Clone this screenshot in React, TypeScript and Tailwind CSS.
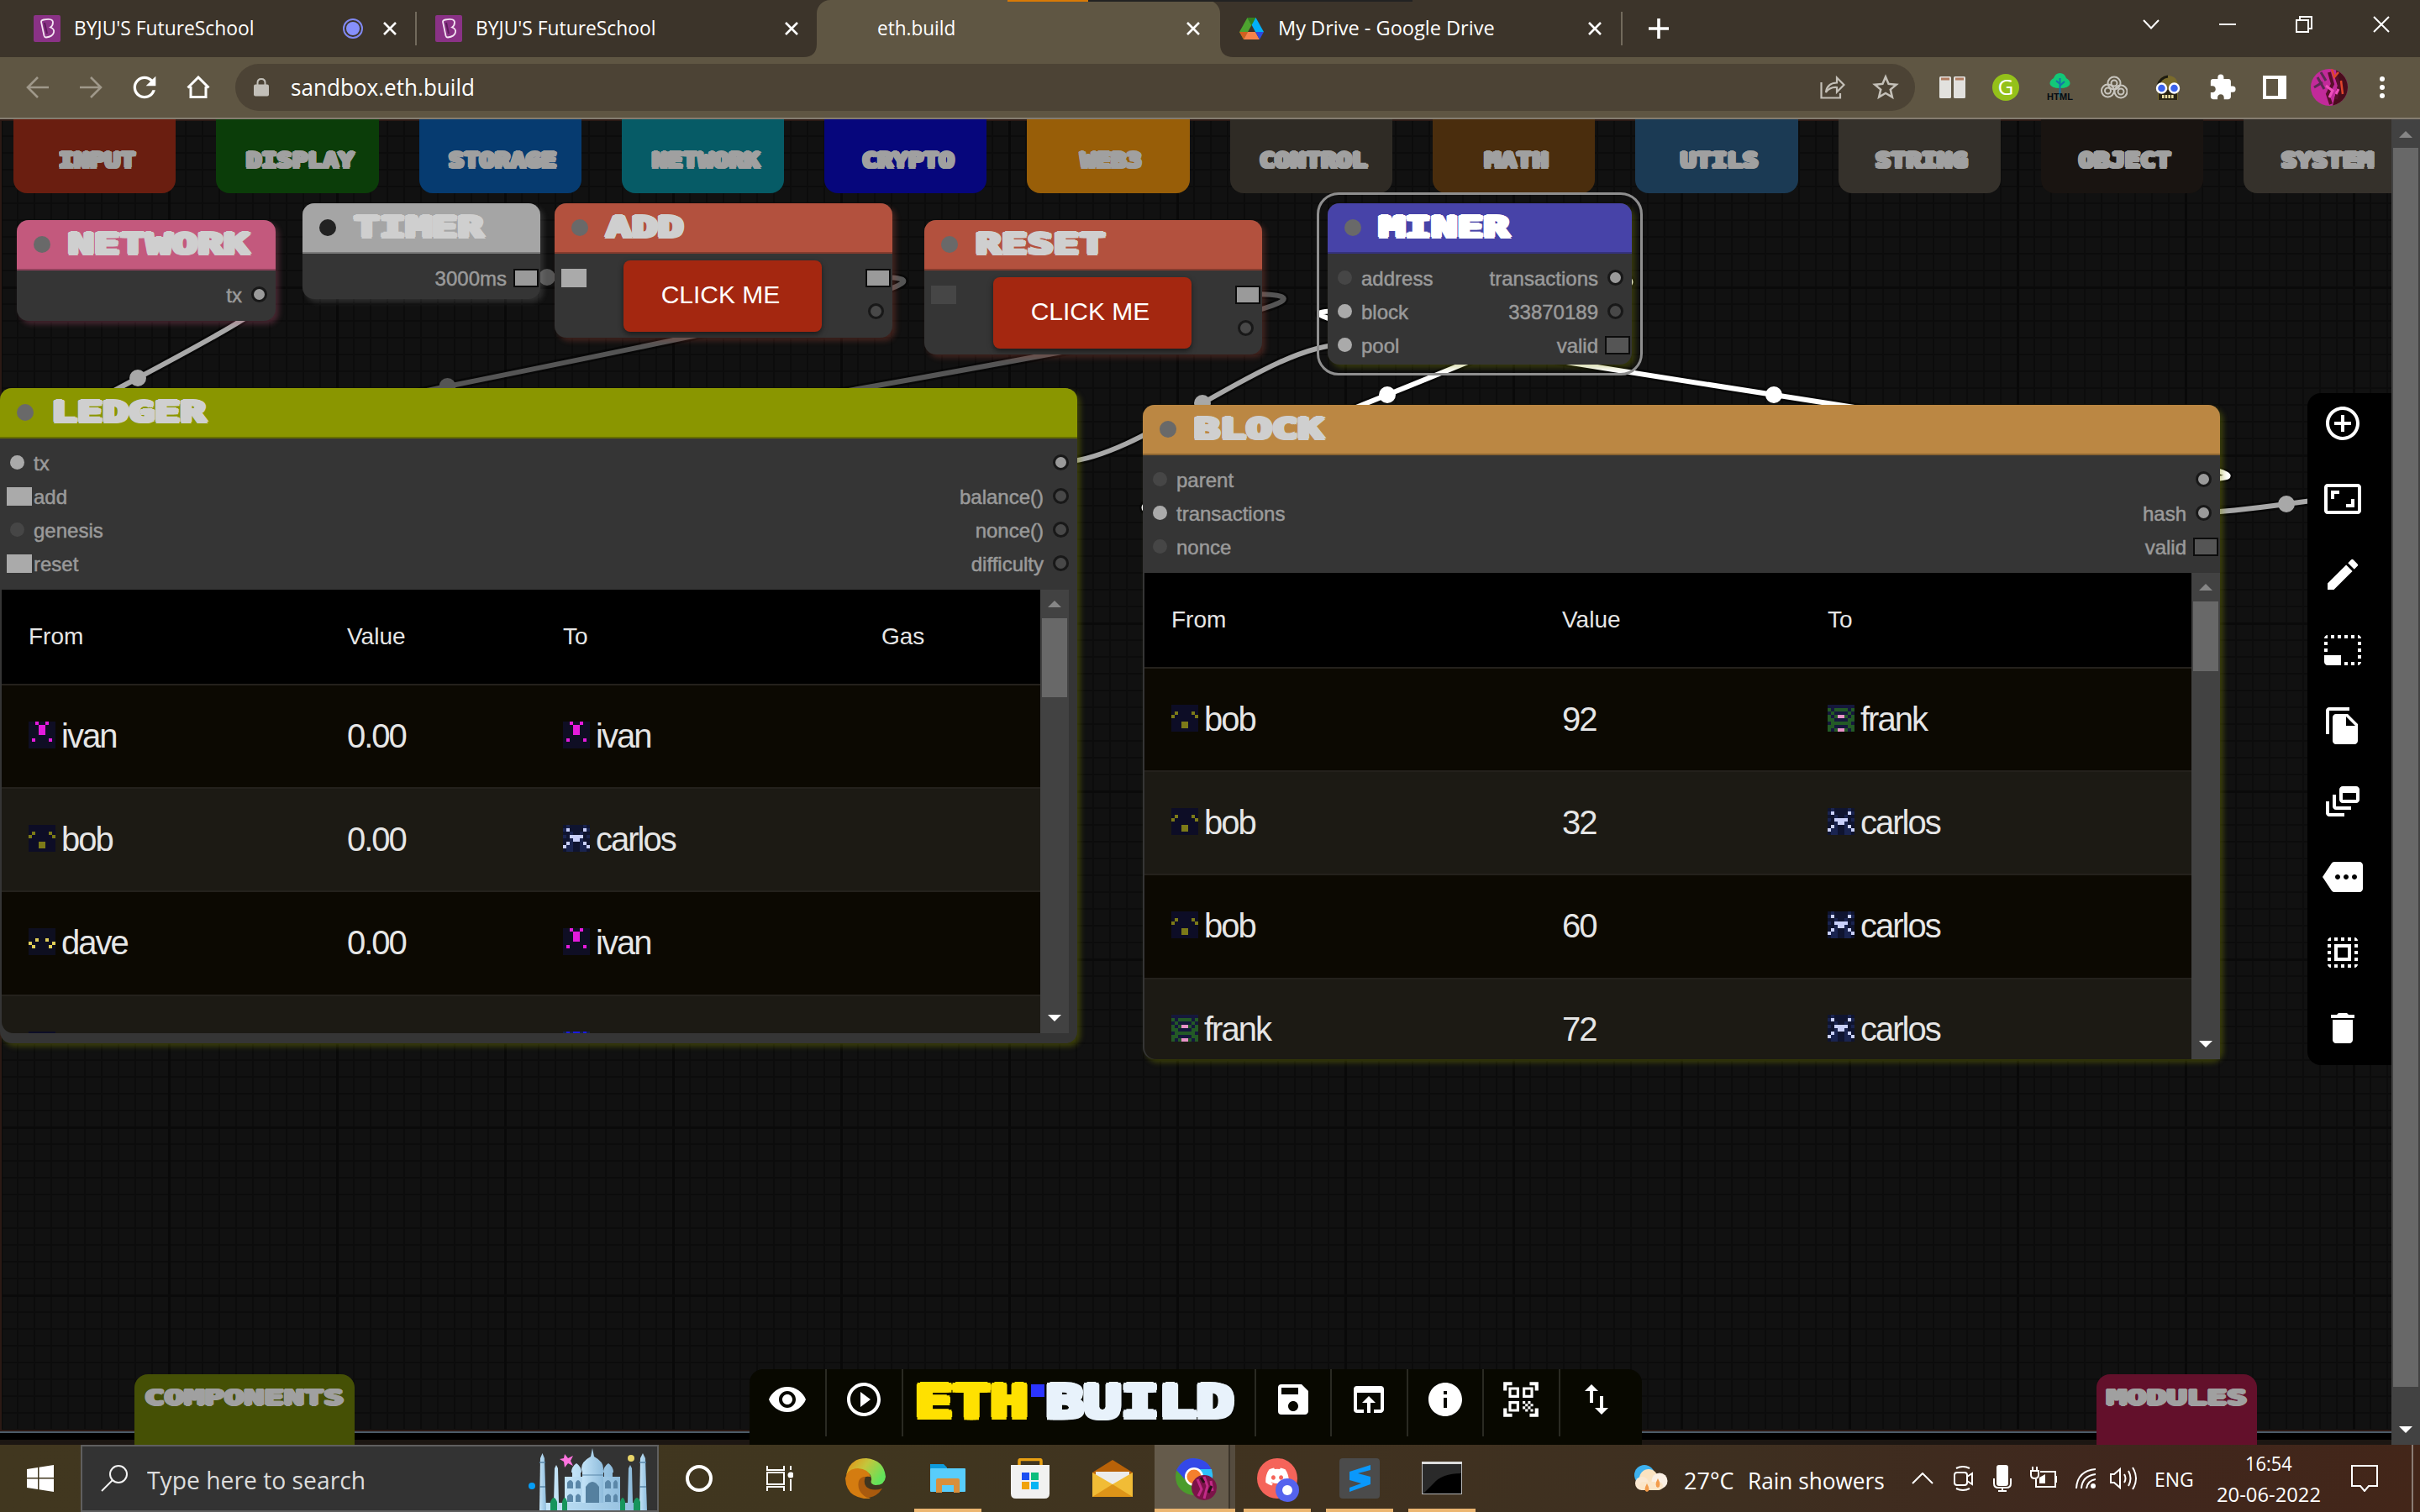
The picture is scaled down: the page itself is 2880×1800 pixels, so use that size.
import React, { useLayoutEffect, useRef, useState } from "react";
import {
  MdAddCircleOutline,
  MdAspectRatio,
  MdEdit,
  MdPhotoSizeSelectSmall,
  MdFileCopy,
  MdDynamicFeed,
  MdMore,
  MdSelectAll,
  MdDelete,
  MdVisibility,
  MdPlayCircleOutline,
  MdSave,
  MdOpenInBrowser,
  MdInfo,
  MdQrCodeScanner,
  MdImportExport,
  MdLock,
  MdStarBorder,
  MdExtension,
  MdRefresh,
} from "react-icons/md";
import { FaDiscord } from "react-icons/fa";

/** Text stretched horizontally to an exact width. */
function Fit({ w, className = "", children }: { w: number; className?: string; children: React.ReactNode }) {
  const ref = useRef<HTMLSpanElement>(null);
  const [scale, setScale] = useState(1);
  useLayoutEffect(() => {
    if (ref.current) setScale(w / ref.current.offsetWidth);
  }, [w]);
  return (
    <span className={"inline-flex shrink-0 whitespace-nowrap " + className} style={{ width: w }}>
      <span ref={ref} className="inline-block origin-left" style={{ transform: `scaleX(${scale})` }}>
        {children}
      </span>
    </span>
  );
}

const ui = "font-['Open_Sans','Noto_Sans',sans-serif]";
const arial = "font-['Liberation_Sans',Arial,sans-serif]";
const block = "font-['DejaVu_Sans_Mono',monospace] font-bold leading-none";
/* Same-colour offsets that thicken the display lettering. */
const heavy2 =
  "[text-shadow:2px_0_currentColor,-2px_0_currentColor,0_2px_currentColor,0_-2px_currentColor,1.5px_1.5px_currentColor,-1.5px_1.5px_currentColor,1.5px_-1.5px_currentColor,-1.5px_-1.5px_currentColor,1px_0_currentColor,-1px_0_currentColor]";
const heavy1 =
  "[text-shadow:1.5px_0_currentColor,-1.5px_0_currentColor,0_1.5px_currentColor,0_-1.5px_currentColor,1px_1px_currentColor,-1px_1px_currentColor,1px_-1px_currentColor,-1px_-1px_currentColor]";
const heavy3 =
  "[text-shadow:3px_0_currentColor,-3px_0_currentColor,0_3px_currentColor,0_-3px_currentColor,2.5px_2.5px_currentColor,-2.5px_2.5px_currentColor,2.5px_-2.5px_currentColor,-2.5px_-2.5px_currentColor,1.5px_0_currentColor,-1.5px_0_currentColor,0_1.5px_currentColor,0_-1.5px_currentColor]";

/* ---------- Browser chrome ---------- */

function Close() {
  return (
    <svg className="size-4 shrink-0" viewBox="0 0 16 16" stroke="#fff" strokeWidth="2.6">
      <path d="M1 1L15 15M15 1L1 15" />
    </svg>
  );
}

function Byju() {
  return (
    <svg className="size-8 shrink-0" viewBox="0 0 32 32" fill="none">
      <rect width="32" height="32" rx="2" fill="#8a3286" />
      <path d="M9 8q0-2 3-2.500q11-2 11 3 0 4-3 6 5 2 4 6-1 5-9 6-2 0-2.500-2Z" stroke="#f4e4f2" strokeWidth="1.800" />
      <path d="M13 9l3 13" stroke="#5c1c5a" strokeWidth="2" />
    </svg>
  );
}

function Drive() {
  return (
    <svg className="h-[26px] w-[29px] shrink-0" viewBox="0 0 29 26">
      <path d="M9.500 0L0 17l5 9L14.500 9z" fill="#4da32f" />
      <path d="M19.500 0L29 17H19L10 0z" fill="#02b0f8" />
      <path d="M9.500 0h10l-5 9z" fill="#33801c" />
      <path d="M0 17h10l-5 9z" fill="#d2601f" />
      <path d="M10 17h9l5 9H5z" fill="#f5834b" />
      <path d="M19 17h10l-5 9z" fill="#2d4be0" />
    </svg>
  );
}

function TabStrip() {
  return (
    <div className={"relative flex h-[68px] items-center bg-[#3c342a] text-[24px] leading-none text-white " + ui}>
      <div className="flex h-10 w-[496px] items-center border-r-2 border-[#726a5c] pl-10 pr-[22px]">
        <Byju />
        <Fit w={215} className="mb-[2px] ml-4">BYJU'S FutureSchool</Fit>
        <svg className="ml-auto mr-[24px] size-6" viewBox="0 0 24 24">
          <circle cx="12" cy="12" r="11" fill="none" stroke="#8088f0" strokeWidth="2" />
          <circle cx="12" cy="12" r="8" fill="#8790fb" />
        </svg>
        <Close />
      </div>
      <div className="flex h-10 w-[476px] items-center pl-[22px] pr-[22px]">
        <Byju />
        <Fit w={215} className="mb-[2px] ml-4">BYJU'S FutureSchool</Fit>
        <span className="flex-1" />
        <Close />
      </div>
      <div className="relative flex h-full w-[480px] items-center rounded-t-[16px] bg-[#5f5643] pl-[72px] pr-6">
        <svg className="absolute -left-4 bottom-0 size-4" viewBox="0 0 16 16"><path d="M16 0V16H0Q16 16 16 0" fill="#5f5643" /></svg>
        <svg className="absolute -right-4 bottom-0 size-4" viewBox="0 0 16 16"><path d="M0 0V16H16Q0 16 0 0" fill="#5f5643" /></svg>
        <Fit w={93} className="mb-[2px]">eth.build</Fit>
        <span className="flex-1" />
        <Close />
      </div>
      <div className="flex h-10 w-[479px] items-center border-r-2 border-[#726a5c] pl-[23px] pr-[23px]">
        <Drive />
        <Fit w={258} className="mb-[2px] ml-[17px]">My Drive - Google Drive</Fit>
        <span className="flex-1" />
        <Close />
      </div>
      <svg className="ml-[31px] size-6" viewBox="0 0 24 24" stroke="#fff" strokeWidth="3.600"><path d="M12 0V24M0 12H24" /></svg>
      <div className="mb-[10px] ml-auto mr-9 flex items-center">
        <svg className="mr-[71px] h-3 w-5" viewBox="0 0 20 12" fill="none" stroke="#fff" strokeWidth="2"><path d="M1 1L10 10.500L19 1" /></svg>
        <span className="mr-[71px] h-[2px] w-5 bg-white" />
        <svg className="mr-[72px] size-5" viewBox="0 0 20 20" fill="none" stroke="#fff" strokeWidth="2"><path d="M1 5H15V19H1ZM5 5V1H19V15H15" /></svg>
        <svg className="size-5" viewBox="0 0 20 20" stroke="#fff" strokeWidth="2"><path d="M1 1L19 19M19 1L1 19" /></svg>
      </div>
      <span className="absolute left-[1199px] top-0 h-[2px] w-24 bg-[#d97a06]" />
      <span className="absolute left-[1295px] top-0 h-[2px] w-[386px] bg-[#222]" />
    </div>
  );
}

function Toolbar() {
  return (
    <div className={"flex h-[74px] items-center border-b-2 border-[#857d70] bg-[#5f5643] text-white " + ui}>
      <svg className="ml-[31px] h-[26px] w-[27px]" viewBox="0 0 27 26" fill="none" stroke="#9f988a" strokeWidth="2.600"><path d="M27 13H2M14 1L2 13L14 25" /></svg>
      <svg className="ml-[37px] h-[26px] w-[27px]" viewBox="0 0 27 26" fill="none" stroke="#9f988a" strokeWidth="2.600"><path d="M0 13H25M13 1L25 13L13 25" /></svg>
      <MdRefresh className="ml-[30px] size-[40px]" />
      <svg className="ml-[30px] size-[28px]" viewBox="0 0 28 28" fill="none" stroke="#fff" strokeWidth="3"><path d="M5 13V25.500H23V13M1.500 14.500L14 2L26.500 14.500" /></svg>
      <div className="ml-[30px] flex h-14 w-[1999px] items-center rounded-full bg-[#4c4335] pl-[22px]">
        <svg className="h-[22px] w-[18px]" viewBox="0 0 18 22" fill="#c2bfb8"><rect y="7.500" width="18" height="14" rx="2" /><path d="M4.500 8V5.500Q4.500 1 9 1T13.500 5.500V8" fill="none" stroke="#c2bfb8" strokeWidth="2" /></svg>
        <Fit w={219} className="mb-[2px] ml-[26px] text-[28px] leading-none">sandbox.eth.build</Fit>
        <span className="flex-1" />
        <svg className="h-7 w-[30px]" viewBox="0 0 30 28" fill="none" stroke="#c4c0b8" strokeWidth="2.200"><path d="M1.500 8V26.500H24V21M7 20q1-11 13-11.500V2.500L28.500 11L20 19.500V14Q11 13.500 7 20Z" /></svg>
        <MdStarBorder className="ml-[29px] mr-4 size-[38px] text-[#c4c0b8]" />
      </div>
      <svg className="ml-[29px] h-7 w-[31px]" viewBox="0 0 31 28"><rect y="1" width="14" height="26" rx="1.500" fill="#e2e1de" /><rect x="17" y="1" width="14" height="26" rx="1.500" fill="#e2e1de" /><path d="M2 4h10M19 4h10" stroke="#b07c60" strokeWidth="3" /></svg>
      <div className="ml-8 flex size-8 items-center justify-center rounded-full bg-[#94c11a] pb-[2px] text-[26px] leading-none">G</div>
      <svg className="ml-[32px] h-9 w-[33px]" viewBox="-1 0 33 36"><path d="M15.500 1Q21 1 23 7Q28 10 27.500 14Q26 19 15.500 19Q5 19 3.500 14Q3 10 8 7Q10 1 15.500 1Z" fill="#12c878" /><path d="M15.500 7V30M15.500 14L11 10M15.500 16L21 11" stroke="#1573a8" strokeWidth="2" /><text x="0" y="33" fontSize="11" fontWeight="700" fontFamily="Liberation Sans" textLength="31" fill="#050b12">HTML</text></svg>
      <svg className="ml-[32px] h-7 w-8" viewBox="0 0 32 28" fill="none" stroke="#c8c5be" strokeWidth="2"><circle cx="16" cy="9" r="7.500" /><circle cx="16" cy="9" r="3.500" /><circle cx="8.500" cy="18" r="7.500" /><circle cx="8.500" cy="18" r="3.500" /><circle cx="24" cy="19" r="7.500" /><circle cx="24" cy="19" r="3.500" /></svg>
      <svg className="ml-[33px] h-[30px] w-[30px]" viewBox="0 0 30 30"><path d="M3 15Q3 1 15 1T27 15V30H3Z" fill="#7a6b2c" /><path d="M3 13Q6 3 15 2" stroke="#1c1a10" strokeWidth="3" fill="none" /><path d="M4 18H26V30H4Z" fill="#2a2414" /><path d="M8 26H22" stroke="#e8dca0" strokeWidth="4" strokeDasharray="2.500 1.200" /><circle cx="7.500" cy="16" r="5.500" fill="#3c63ea" stroke="#fff" strokeWidth="2.400" /><circle cx="22.500" cy="16" r="5.500" fill="#3c63ea" stroke="#fff" strokeWidth="2.400" /></svg>
      <MdExtension className="ml-[33px] size-[34px]" />
      <svg className="ml-[31px] size-7" viewBox="0 0 28 28"><path d="M0 0H28V28H0ZM4 4V24H18V4Z" fill="#fff" fillRule="evenodd" /></svg>
      <Avatar className="ml-[29px] size-11" />
      <svg className="ml-[38px] h-[26px] w-[6px]" viewBox="0 0 6 26" fill="#fff"><circle cx="3" cy="3" r="3" /><circle cx="3" cy="13" r="3" /><circle cx="3" cy="23" r="3" /></svg>
    </div>
  );
}

function Avatar({ className }: { className: string }) {
  return (
    <svg className={"shrink-0 rounded-full " + className} viewBox="0 0 44 44">
      <rect width="44" height="44" fill="#c22a9a" />
      <path d="M30 0L44 0V44H26L32 20Z" fill="#4a0c1c" />
      <path d="M8 10L16 24M4 22L14 16M12 4L18 14" stroke="#5b2b52" strokeWidth="3" />
      <path d="M22 4L26 18L20 30L24 42M30 8L34 20L30 36" stroke="#5a0f2c" strokeWidth="4" fill="none" />
      <path d="M25 0L28 10L33 4M36 14L38 30" stroke="#e0452a" strokeWidth="2.500" fill="none" />
      <path d="M18 20L26 26L22 34M33 24L30 30" stroke="#ef4fbc" strokeWidth="3" fill="none" />
    </svg>
  );
}

/* ---------- Canvas nodes ---------- */

type Slot = { label?: string; on?: boolean; box?: boolean };

function SlotMark({ slot, out }: { slot: Slot; out?: boolean }) {
  if (slot.box) {
    const tone = slot.on ? (out ? "bg-[#9a9a9a]" : "bg-[#aaaaaa]") : out ? "bg-[#555]" : "bg-[#464646]";
    return (
      <span className={"flex w-10 shrink-0 " + (out ? "justify-end pr-[2px]" : "pl-2")}>
        <span className={"mt-[2px] h-[22px] w-[30px] " + tone + (out ? " border-2 border-[#0c0c0c]" : "")} />
      </span>
    );
  }
  const tone = slot.on ? (out ? "bg-[#9a9a9a]" : "bg-[#aaaaaa]") : out ? "bg-[#484848]" : "bg-[#464646]";
  return (
    <span className="flex w-10 shrink-0 justify-center">
      <span className={(out ? "size-[19px] border-[3px] border-[#181818] " : "size-[17px] ") + "rounded-full " + tone} />
    </span>
  );
}

function Slots({ inputs = [], outputs = [] }: { inputs?: Slot[]; outputs?: Slot[] }) {
  return (
    <div className={"flex justify-between pt-2 text-[24px] leading-none text-[#9a9a9a] [-webkit-text-stroke:0.5px_#9a9a9a] " + arial}>
      <div>
        {inputs.map((s, i) => (
          <div key={i} className="flex h-10 items-center">
            <SlotMark slot={s} />
            <span className="mt-[3px]">{s.label}</span>
          </div>
        ))}
      </div>
      <div>
        {outputs.map((s, i) => (
          <div key={i} className="flex h-10 items-center justify-end">
            <span className="mt-[3px]">{s.label}</span>
            <SlotMark slot={s} out />
          </div>
        ))}
      </div>
    </div>
  );
}

type NodeProps = {
  title: string;
  w: number;
  place: string;
  head: string;
  dot?: string;
  ink?: string;
  inputs?: Slot[];
  outputs?: Slot[];
  children?: React.ReactNode;
};

function Node({ title, w, place, head, dot = "bg-[#696969]", ink = "text-[#cfcfcf]", inputs, outputs, children }: NodeProps) {
  return (
    <div className={"absolute flex flex-col rounded-[14px] bg-[#353535] " + place}>
      <div className={"flex h-[60px] shrink-0 items-center rounded-t-[14px] border-b-2 border-black/25 pl-5 " + head}>
        <span className={"size-5 rounded-full " + dot} />
        <Fit w={w} className={"mb-[2px] ml-[21px] text-[33px] " + heavy2 + " " + block + " " + ink}>
          {title}
        </Fit>
      </div>
      <Slots inputs={inputs} outputs={outputs} />
      {children}
    </div>
  );
}

function ClickMe() {
  return (
    <button className={"absolute left-[82px] top-[68px] h-[85px] w-[236px] rounded-[8px] bg-[#a42710] pb-[3px] pr-[5px] text-[30px] leading-none text-white shadow-[0_3px_6px_rgba(0,0,0,0.5)] " + arial}>
      CLICK ME
    </button>
  );
}

const sprites: Record<string, { rows: string[]; colors: Record<string, string> }> = {
  ivan: {
    rows: ["..m..m..", "...mm...", "...mm...", "...mm...", "........", ".m....m.", "........", "........"],
    colors: { ".": "#0f0e24", m: "#e41bdc" },
  },
  bob: {
    rows: ["........", "........", ".y....y.", "y......y", "........", "...yy...", "...yy...", "........"],
    colors: { ".": "#0d0d26", y: "#7c7a18" },
  },
  dave: {
    rows: ["........", "........", "........", "..y..y..", "y......y", ".y....y.", "........", "........"],
    colors: { ".": "#0e0f20", y: "#e0ce58" },
  },
  carlos: {
    rows: [".n....n.", "nw....wn", "..n..n..", "n.wwww.n", "..nwwn..", ".wn..nw.", "wnn..nnw", ".nn..nn."],
    colors: { ".": "#0f1430", n: "#1a2450", w: "#c9d0fa" },
  },
  frank: {
    rows: ["nnnnnnnn", "gnggggng", "ngnnnngn", "gngppgng", "ggnnnngg", "nggggggn", "ggnnnngg", "gngppgng"],
    colors: { n: "#15183c", g: "#235a26", p: "#e892c8" },
  },
  grace: {
    rows: [".b.bb.b.", "bb.bb.bb", "........", "........", "........", "........", "........", "........"],
    colors: { ".": "#12204c", b: "#1a1ae0" },
  },
};

function Person({ name, bare }: { name: string; bare?: boolean }) {
  const s = sprites[name];
  return (
    <span className="flex items-center gap-[7px]">
      <svg className="mt-[-4px] size-8 shrink-0" viewBox="0 0 8 8" shapeRendering="crispEdges">
        {s.rows.flatMap((row, y) => row.split("").map((c, x) => <rect key={x + "-" + y} x={x} y={y} width="1" height="1" fill={s.colors[c]} />))}
      </svg>
      {!bare && <span className="mb-[2px]">{name}</span>}
    </span>
  );
}

function Table({ cols, heads, rows, thumb }: { cols: string; heads: string[]; rows: [string, string, string][]; thumb: string }) {
  return (
    <div className={"flex flex-1 overflow-hidden rounded-bl-[14px] text-white " + arial}>
      <div className="flex-1 text-[#e6e6e6]">
        <div className={"grid h-[114px] items-center border-b-2 border-[#24211c] bg-black pb-[1px] text-[28px] leading-none " + cols}>
          {heads.map((h) => (
            <span key={h}>{h}</span>
          ))}
        </div>
        {rows.map(([from, value, to], i) => (
          <div
            key={i}
            className={
              "grid h-[123.2px] items-center border-b-2 border-[#24211c] text-[40px] leading-none tracking-[-2px] " +
              cols +
              (i % 2 ? " bg-[#1c1a14]" : " bg-[#0c0902]")
            }
          >
            <Person name={from} bare={!value} />
            <span className="mb-[2px]">{value}</span>
            <Person name={to} bare={!value} />
          </div>
        ))}
      </div>
      <div className="flex w-[34px] shrink-0 flex-col items-center bg-[#424242]">
        <Arrow className="mt-[13px] h-2 w-4 shrink-0 text-[#868686]" up />
        <div className={"w-[30px] shrink-0 bg-[#686868] " + thumb} />
        <span className="flex-1" />
        <Arrow className="mb-[14px] h-2 w-4 shrink-0 text-white" />
      </div>
    </div>
  );
}

function Arrow({ className, up }: { className: string; up?: boolean }) {
  return (
    <svg className={className} viewBox="0 0 16 8" fill="currentColor">
      <path d={up ? "M0 8L8 0L16 8Z" : "M0 0L8 8L16 0Z"} />
    </svg>
  );
}

type Pt = [number, number];
const links: { a: Pt; b: Pt; color: string }[] = [
  { a: [308, 208], b: [20, 408], color: "#a8a8a8" },
  { a: [626, 188], b: [676, 188], color: "#555555" },
  { a: [1045, 188], b: [20, 448], color: "#555555" },
  { a: [1485, 208], b: [20, 528], color: "#555555" },
  { a: [1262, 408], b: [1600, 268], color: "#a8a8a8" },
  { a: [1922, 188], b: [1380, 468], color: "#ffffff" },
  { a: [2622, 428], b: [1600, 228], color: "#ffffff" },
  { a: [2622, 468], b: [2820, 448], color: "#a8a8a8" },
];

/** Spline wires between slots, with a bead at each midpoint. */
function Wires() {
  return (
    <svg className="absolute left-0 top-0 h-[1562px] w-[2846px]" viewBox="0 0 2846 1562" fill="none">
      {links.map(({ a, b, color }, i) => {
        const k = Math.hypot(b[0] - a[0], b[1] - a[1]) * 0.25;
        const d = `M${a[0]} ${a[1]}C${a[0] + k} ${a[1]} ${b[0] - k} ${b[1]} ${b[0]} ${b[1]}`;
        return (
          <g key={i}>
            <path d={d} stroke="#000" strokeOpacity="0.5" strokeWidth="11" />
            <path d={d} stroke={color} strokeWidth="6" />
            <circle cx={(a[0] + b[0]) / 2} cy={(a[1] + b[1]) / 2} r="10" fill={color} />
          </g>
        );
      })}
    </svg>
  );
}

const menu: { label: string; w: number; bg: string }[] = [
  { label: "INPUT", w: 91, bg: "bg-[#6a1e10]" },
  { label: "DISPLAY", w: 128, bg: "bg-[#0b3d09]" },
  { label: "STORAGE", w: 128, bg: "bg-[#063b70]" },
  { label: "NETWORK", w: 128, bg: "bg-[#065b66]" },
  { label: "CRYPTO", w: 110, bg: "bg-[#06067c]" },
  { label: "WEB3", w: 73, bg: "bg-[#985e08]" },
  { label: "CONTROL", w: 128, bg: "bg-[#2f2b25]" },
  { label: "MATH", w: 76, bg: "bg-[#4a2d0d]" },
  { label: "UTILS", w: 92, bg: "bg-[#1b3a54]" },
  { label: "STRING", w: 110, bg: "bg-[#35312b]" },
  { label: "OBJECT", w: 110, bg: "bg-[#191411]" },
  { label: "SYSTEM", w: 110, bg: "bg-[#35312b]" },
];

const sideIcons = [MdAddCircleOutline, MdAspectRatio, MdEdit, MdPhotoSizeSelectSmall, MdFileCopy, MdDynamicFeed, MdMore, MdSelectAll, MdDelete];

function Dock() {
  const cell = "flex h-20 w-[90.500px] shrink-0 items-center justify-center border-r-2 border-[#2a2a22] pb-2";
  return (
    <div className="absolute bottom-0 left-[892px] flex h-[90px] w-[1062px] rounded-t-[16px] bg-[#080800] text-white">
      <div className="flex h-20 w-[92px] shrink-0 items-center justify-center border-r-2 border-[#2a2a22] pb-2"><MdVisibility className="size-12" /></div>
      <div className={cell}><MdPlayCircleOutline className="size-12" /></div>
      <div className={"flex h-20 w-[420px] shrink-0 items-center border-r-2 border-[#2a2a22] pb-[2px] pl-[14px] text-[54px] " + heavy3 + " " + block}>
        <Fit w={135} className="text-[#ffe100]">ETH</Fit>
        <span className="mb-[28px] ml-[3px] h-[15px] w-4 bg-[#2b34ff]" />
        <Fit w={224} className="ml-[2px] text-[#e8f2fb]">BUILD</Fit>
      </div>
      <div className={cell}><MdSave className="size-12" /></div>
      <div className={cell}><MdOpenInBrowser className="size-12" /></div>
      <div className={cell}><MdInfo className="size-12" /></div>
      <div className={cell}><MdQrCodeScanner className="size-[50px]" /></div>
      <div className="flex h-20 w-[86px] items-center justify-center pb-2"><MdImportExport className="size-12" /></div>
    </div>
  );
}

function Sandbox() {
  return (
    <div className="flex h-[1578px]">
      <div className="relative h-full w-[2846px] overflow-hidden bg-black">
        <div className="h-[1562px] border-b-2 border-l-2 border-t-2 border-[#2c1a15] bg-[#111111] bg-[linear-gradient(#0a0a0a_3px,transparent_3px),linear-gradient(90deg,#090909_3px,transparent_3px),linear-gradient(#0c0c0c_2px,transparent_2px),linear-gradient(90deg,#0c0c0c_2px,transparent_2px)] bg-[length:200px_200px,200px_200px,20px_20px,20px_20px] bg-[position:-2px_-3px]" />
        <div className="h-[2px] bg-[#4d5c69]" />
        <div className="h-2 bg-black" />
        <div className="h-[6px] bg-[#1c1612]" />

        <div className="absolute left-4 top-0 flex gap-12">
          {menu.map((m) => (
            <div key={m.label} className={"flex h-[88px] w-[193.300px] shrink-0 items-center justify-center rounded-b-[16px] pl-[6px] pt-[10px] " + m.bg}>
              <Fit w={m.w} className={"text-[24px] text-[#a0a0a0] " + heavy2 + " " + block}>{m.label}</Fit>
            </div>
          ))}
        </div>

        <Wires />

        <Node title="NETWORK" w={216} place="left-[20px] top-[120px] h-[120px] w-[308px] shadow-[4px_4px_6px_rgba(195,89,123,0.3)]" head="bg-[#c3597d]" outputs={[{ label: "tx", on: true }]} />
        <Node title="TIMER" w={154} place="left-[360px] top-[100px] h-[114px] w-[283px] shadow-[4px_4px_6px_rgba(165,165,165,0.2)]" head="bg-[#a5a5a5]" dot="bg-[#222]" outputs={[{ label: "3000ms", on: true, box: true }]} />
        <Node
          title="ADD"
          w={93}
          place="left-[660px] top-[100px] h-[160px] w-[402px] shadow-[4px_4px_6px_rgba(179,81,62,0.3)]"
          head="bg-[#b3513e]"
          inputs={[{ box: true, on: true }]}
          outputs={[{ box: true, on: true }, {}]}
        >
          <ClickMe />
        </Node>
        <Node
          title="RESET"
          w={154}
          place="left-[1100px] top-[120px] h-[160px] w-[402px] shadow-[4px_4px_6px_rgba(179,81,62,0.3)]"
          head="bg-[#b3513e]"
          inputs={[{ box: true }]}
          outputs={[{ box: true, on: true }, {}]}
        >
          <ClickMe />
        </Node>
        <div className="absolute left-[1567px] top-[87px] h-[218px] w-[388px] rounded-[26px] border-[3px] border-[#8f8f8f]" />
        <Node
          title="MINER"
          w={155}
          place="left-[1580px] top-[100px] h-[192px] w-[362px] shadow-[4px_4px_6px_rgba(138,150,0,0.3)]"
          head="bg-[#4743a8]"
          ink="text-white"
          inputs={[{ label: "address" }, { label: "block", on: true }, { label: "pool", on: true }]}
          outputs={[{ label: "transactions", on: true }, { label: "33870189" }, { label: "valid", box: true }]}
        />
        <Node
          title="LEDGER"
          w={184}
          place="left-0 top-[320px] h-[780px] w-[1282px] shadow-[4px_4px_6px_rgba(138,150,0,0.35)]"
          head="bg-[#8a9600]"
          inputs={[{ label: "tx", on: true }, { label: "add", on: true, box: true }, { label: "genesis" }, { label: "reset", on: true, box: true }]}
          outputs={[{ on: true }, { label: "balance()" }, { label: "nonce()" }, { label: "difficulty" }]}
        >
          <div className="mb-3 ml-[2px] mr-[10px] mt-3 flex flex-1 overflow-hidden">
            <Table
              cols="grid-cols-[379px_257px_379px_1fr] pl-8"
              heads={["From", "Value", "To", "Gas"]}
              rows={[
                ["ivan", "0.00", "ivan"],
                ["bob", "0.00", "carlos"],
                ["dave", "0.00", "ivan"],
                ["bob", "", "grace"],
              ]}
              thumb="mt-[13px] h-[94px]"
            />
          </div>
        </Node>
        <Node
          title="BLOCK"
          w={154}
          place="left-[1360px] top-[340px] h-[779px] w-[1282px] shadow-[4px_4px_6px_rgba(138,150,0,0.35)]"
          head="bg-[#bb8743]"
          inputs={[{ label: "parent" }, { label: "transactions", on: true }, { label: "nonce" }]}
          outputs={[{ on: true }, { label: "hash", on: true }, { label: "valid", box: true }]}
        >
          <div className="ml-[2px] mt-3 flex flex-1 overflow-hidden">
            <Table
              cols="grid-cols-[465px_316px_1fr] pl-8"
              heads={["From", "Value", "To"]}
              rows={[
                ["bob", "92", "frank"],
                ["bob", "32", "carlos"],
                ["bob", "60", "carlos"],
                ["frank", "72", "carlos"],
              ]}
              thumb="mt-[13px] h-[83px]"
            />
          </div>
        </Node>

        <div className="absolute right-0 top-[326px] flex h-[800px] w-[100px] flex-col items-center gap-[42px] rounded-l-[16px] bg-black pr-4 pt-3 text-white">
          {sideIcons.map((Icon, i) => (
            <Icon key={i} className="size-12 shrink-0" />
          ))}
        </div>

        <div className={"absolute bottom-0 left-[160px] flex h-[84px] w-[262px] justify-center rounded-t-[16px] bg-[#455005] pt-4 text-[24px] text-[#a0a0a0] " + heavy1 + " " + block}>
          <Fit w={238}>COMPONENTS</Fit>
        </div>
        <div className={"absolute bottom-0 left-[2495px] flex h-[84px] w-[191px] justify-center rounded-t-[16px] bg-[#63102b] pt-4 text-[24px] text-[#a0a0a0] " + heavy1 + " " + block}>
          <Fit w={167}>MODULES</Fit>
        </div>
        <Dock />
      </div>
      <div className="flex w-[34px] flex-col items-center bg-[#424242]">
        <Arrow className="mt-[14px] h-2 w-4 text-[#868686]" up />
        <div className="mt-3 h-[1475px] w-[30px] bg-[#686868]" />
        <Arrow className="mt-[47px] h-2 w-4 text-white" />
      </div>
    </div>
  );
}

/* ---------- Taskbar ---------- */

function Monument() {
  return (
    <svg className="h-[76px] w-[150px]" viewBox="0 0 150 76">
      <defs>
        <linearGradient id="marble" x1="0" x2="1">
          <stop offset="0" stopColor="#c4e4f8" />
          <stop offset="1" stopColor="#8fbcdc" />
        </linearGradient>
      </defs>
      <g fill="url(#marble)">
        <rect x="20" y="67" width="112" height="9" />
        <path d="M77 2L79 12Q90 18 90 26Q90 31 86 34H68Q64 31 64 26Q64 18 75 12Z" />
        <path d="M44 36H110V67H44Z" />
        <path d="M65 28H90V67H65Z" />
        <path d="M58 20Q64 24 64 31H52Q52 24 58 20ZM96 20Q102 24 102 31H90Q90 24 96 20Z" />
        <path d="M53 31H63V36H53ZM91 31H101V36H91Z" />
        <path d="M14 76L15 14L17.500 8L20 14L22 76Z" />
        <path d="M133 76L134 14L137 8L140 14L142 76Z" />
        <path d="M31 67L32 26L34 22L36 26L37 67ZM119 67L120 26L122 22L124 26L125 67Z" />
      </g>
      <path d="M65 34H90" stroke="#5b87a8" strokeWidth="1" />
      <path d="M69 67V48Q77 36 85 48V67Z" fill="#55809f" />
      <path d="M47 50V43q4-6 7 0v7zM57 50V43q3-6 6 0v7zM92 50V43q4-6 7 0v7zM102 50V43q3-6 5 0v7zM47 66V59q4-5 7 0v7zM57 66V59q3-5 6 0v7zM92 66V59q4-5 7 0v7zM102 66V59q3-5 5 0v7z" fill="#5b87a8" />
      <path d="M14 19H21M14 48H21M133 19H141M133 48H141" stroke="#5b87a8" strokeWidth="1.500" />
      <path d="M27 76V66Q31 56 35 66V76ZM126 76V66Q130 56 134 66V76ZM41 76V66Q44 56 47 66V76ZM110 76V66Q113 56 116 66V76Z" fill="#17955c" />
      <path d="M44 9L48 14L54 11L51 17L54 23L48 20L44 25L43 18L38 15L43 14Z" fill="#ff74e0" />
      <circle cx="123" cy="14" r="4" fill="#e8d468" />
      <circle cx="5" cy="47" r="4" fill="#069df5" />
    </svg>
  );
}

function TaskApp({ children, line, active }: { children: React.ReactNode; line?: boolean; active?: boolean }) {
  return (
    <div className={"relative flex h-20 w-24 shrink-0 items-center justify-center " + (active ? "bg-[#655b4b]" : "")}>
      {active && <span className="absolute right-0 top-0 h-20 w-2 border-l-2 border-[#3c352a] bg-[#554c3f]" />}
      <span className="relative flex">{children}</span>
      {line && <span className={"absolute bottom-0 h-1 bg-[#ecb671] " + (active ? "w-24" : "w-20")} />}
    </div>
  );
}

function Apps() {
  return (
    <div className="ml-[6px] flex gap-[2px]">
      <TaskApp>
        <svg className="size-12" viewBox="0 0 48 48">
          <defs>
            <linearGradient id="edgeA" x1="0" y1="0" x2="1" y2="0.500">
              <stop offset="0" stopColor="#e98a10" />
              <stop offset="0.500" stopColor="#c4c63c" />
              <stop offset="1" stopColor="#63e35a" />
            </linearGradient>
          </defs>
          <path d="M1 20Q5 0 25 0Q46 2 48 22Q47 32 36 32Q29 31 31 26Q32 18 22 15Q8 12 1 20Z" fill="url(#edgeA)" />
          <path d="M0 24Q2 12 15 12Q28 13 30 22Q20 20 16 29Q16 42 30 48Q26 48 22 48Q1 45 0 24Z" fill="#d47c10" />
          <path d="M16 27Q13 40 26 47Q38 46 44 36Q32 40 25 34Q21 29 24 22Q18 22 16 27Z" fill="#a85a0e" />
        </svg>
      </TaskApp>
      <TaskApp line>
        <svg className="h-[34px] w-[42px]" viewBox="0 0 42 34">
          <path d="M0 0H16L20 4V10H0Z" fill="#0f9bdc" />
          <rect y="5" width="42" height="28" rx="1" fill="#58cdfb" />
          <path d="M7 34V19Q7 17 9 17H33Q35 17 35 19V34H28V25H14V34Z" fill="#d98f3c" />
        </svg>
      </TaskApp>
      <TaskApp>
        <svg className="size-12" viewBox="0 0 48 48">
          <path d="M11 11V3Q11 1.500 13 1.500H35Q37 1.500 37 3V11" stroke="#e9a012" strokeWidth="3.500" fill="none" />
          <path d="M1 8H47V42Q47 48 41 48H7Q1 48 1 42Z" fill="#f1f1f1" />
          <rect x="14" y="17" width="9" height="9" fill="#1b50f2" /><rect x="25" y="17" width="9" height="9" fill="#0dbd7c" />
          <rect x="14" y="28" width="9" height="9" fill="#f0a30c" /><rect x="25" y="28" width="9" height="9" fill="#07b4f4" />
        </svg>
      </TaskApp>
      <TaskApp>
        <svg className="h-11 w-12" viewBox="0 0 48 44">
          <path d="M0 15L24 0L48 15V20H0Z" fill="#b96208" />
          <path d="M4 14H44V32H4Z" fill="#ececec" />
          <path d="M0 15L24 29L48 15V44H0Z" fill="#f1bc36" />
          <path d="M0 44L24 29L48 44Z" fill="#dd9418" />
        </svg>
      </TaskApp>
      <TaskApp line active>
        <svg className="size-[54px]" viewBox="0 0 54 54">
          <circle cx="26" cy="25" r="22" fill="#4b9c2c" />
          <path d="M5 17Q13 2 26 3Q42 4 47 17H26Q17 18 15 28Z" fill="#3448e8" />
          <path d="M26 16H47Q51 30 42 40L30 46L36 30Z" fill="#2cc0fa" />
          <circle cx="26" cy="25" r="11" fill="#fff" />
          <circle cx="26" cy="25" r="8.500" fill="#f5802e" />
          <circle cx="38" cy="38" r="15" fill="#7b1348" />
          <path d="M30 28L35 40L31 48M38 25L42 36L38 51M46 30L48 42" stroke="#c22a88" strokeWidth="3" fill="none" />
          <path d="M34 26L38 32M43 44L47 36" stroke="#2a1018" strokeWidth="3" />
        </svg>
      </TaskApp>
      <TaskApp line>
        <div className="relative flex size-12 items-center justify-center rounded-full bg-[#f5645a] text-white">
          <FaDiscord className="mb-1 size-[30px]" />
          <span className="absolute -bottom-1 -right-[2px] flex size-7 items-center justify-center rounded-full bg-[#5563ee]">
            <span className="size-3 rounded-full bg-white" />
          </span>
        </div>
      </TaskApp>
      <TaskApp line>
        <svg className="size-12" viewBox="0 0 48 48">
          <rect width="48" height="48" rx="4" fill="#4b4b4b" />
          <path d="M37 8L12 16V26L26 30L12 35V40L37 31V22L22 18L37 14Z" fill="#0a98fb" />
        </svg>
      </TaskApp>
      <TaskApp line>
        <svg className="h-10 w-12" viewBox="0 0 48 40">
          <rect x="0.500" y="0.500" width="47" height="38" fill="#000" stroke="#b8b8b8" />
          <path d="M1 3H47V14Q24 14 14 26Q8 32 2 38H1Z" fill="#2a2a2a" />
          <path d="M0 1.500H48" stroke="#ddd" strokeWidth="3" />
        </svg>
      </TaskApp>
    </div>
  );
}

function Taskbar() {
  return (
    <div className={"flex h-20 items-center bg-[linear-gradient(90deg,#41371f_0%,#40361f_35%,#403220_55%,#3e2f20_72%,#40271d_88%,#432619_100%)] leading-none text-white " + ui}>
      <div className="flex w-24 justify-center">
        <svg className="size-8" viewBox="0 0 32 32" fill="#fff"><path d="M0 5L13 3V15H0ZM14.500 2.700L32 0V15H14.500ZM0 16.500H13V29L0 27ZM14.500 16.500H32V32L14.500 29.300Z" /></svg>
      </div>
      <div className="flex h-20 w-[688px] items-center border-2 border-[#5f5f5f] bg-[#333] pl-[22px]">
        <svg className="size-8" viewBox="0 0 32 32" fill="none" stroke="#f2f2f2" strokeWidth="2"><circle cx="21" cy="11" r="10" /><path d="M14 18L1 31" /></svg>
        <Fit w={260} className="ml-[23px] mt-1 text-[30px] text-[#dcdcdc]">Type here to search</Fit>
        <span className="flex-1" />
        <span className="mr-1 self-end"><Monument /></span>
      </div>
      <div className="flex w-24 justify-center">
        <span className="size-8 rounded-full border-[4px] border-white" />
      </div>
      <div className="flex w-24 justify-center">
        <svg className="size-8" viewBox="0 0 32 32" fill="none" stroke="#fff" strokeWidth="2"><path d="M1 1V6H21V1M1 9H21V23H1ZM1 31V26H21V31M29 1V6M29 17V31" /><circle cx="29" cy="12" r="2.500" fill="#fff" /></svg>
      </div>
      <Apps />
      <svg className="ml-[181px] h-8 w-10 shrink-0" viewBox="0 0 40 32">
        <circle cx="12" cy="12" r="12" fill="#3db1ef" />
        <circle cx="17" cy="16" r="11" fill="#fbe3c0" /><circle cx="30" cy="19" r="9.500" fill="#fbf0e4" /><circle cx="9" cy="22" r="8" fill="#fbe9d2" /><rect x="6" y="20" width="28" height="10" rx="5" fill="#fbe6c8" />
        <path d="M28 16Q33 25 28 27Q23 25 28 16ZM15 22Q20 31 15 32Q10 31 15 22Z" fill="#f39c4b" />
      </svg>
      <Fit w={59} className="ml-[19px] mt-1 text-[27px]">27°C</Fit>
      <Fit w={163} className="ml-[17px] mt-1 text-[27px]">Rain showers</Fit>
      <svg className="ml-[32px] h-[14px] w-[26px] shrink-0" viewBox="0 0 26 14" fill="none" stroke="#fff" strokeWidth="2"><path d="M1 13L13 1L25 13" /></svg>
      <svg className="ml-[24px] h-[30px] w-6 shrink-0" viewBox="0 0 24 30" fill="none" stroke="#fff" strokeWidth="2"><rect x="1" y="8" width="15" height="15" rx="3" /><path d="M16 13L22 9V22L16 18M3 3Q11-1 19 3M3 27Q11 31 19 27" /></svg>
      <svg className="ml-[23px] h-8 w-[22px] shrink-0" viewBox="0 0 22 32" fill="none" stroke="#fff" strokeWidth="2"><rect x="5" y="1" width="12" height="23" rx="2" fill="#fff" /><path d="M1 16V22Q1 27 6 27H16Q21 27 21 22V16M11 27V31M6 31H16" /></svg>
      <svg className="ml-[22px] h-7 w-8 shrink-0" viewBox="0 0 32 28" fill="none" stroke="#fff" strokeWidth="2"><path d="M12 6H30V24H7V15M31 11V19M3 0V5M8 0V5M1 5H10V10Q10 14 5.500 14Q1 14 1 10Z" /><path d="M11 20V13L18 9V20Z" fill="#fff" stroke="none" /></svg>
      <svg className="ml-[22px] h-6 w-6 shrink-0" viewBox="0 0 24 24" fill="none" stroke="#fff" strokeWidth="2"><path d="M1 24Q2 3 24 1M7 24Q8 9 24 7M13 24Q14 15 24 13" /><circle cx="21" cy="21" r="3" fill="#fff" stroke="none" /></svg>
      <svg className="ml-[17px] h-7 w-[33px] shrink-0" viewBox="0 0 33 28" fill="none" stroke="#fff" strokeWidth="2"><path d="M1 9H5L12 3V25L5 19H1ZM17 9Q20 14 17 19M22 5Q27 14 22 23M27 1Q35 14 27 27" /></svg>
      <Fit w={47} className="ml-[20px] mt-[2px] text-[24px]">ENG</Fit>
      <div className="ml-[27px] mt-[2px] flex flex-col items-center gap-[14px] text-[23px]">
        <Fit w={56}>16:54</Fit>
        <Fit w={124}>20-06-2022</Fit>
      </div>
      <svg className="ml-[36px] h-8 w-8 shrink-0" viewBox="0 0 32 32" fill="none" stroke="#fff" strokeWidth="2"><path d="M1 1H31V25H21L16 31L11 25H1Z" /></svg>
      <span className="ml-[40px] h-20 w-[2px] bg-[#8a7c74]" />
    </div>
  );
}

export default function App() {
  return (
    <div className="h-[1800px] w-[2880px] overflow-hidden bg-black">
      <TabStrip />
      <Toolbar />
      <Sandbox />
      <Taskbar />
    </div>
  );
}
